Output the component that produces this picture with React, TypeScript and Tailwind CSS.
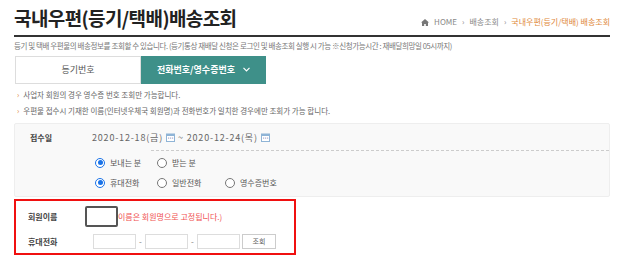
const font = "font-['Noto_Sans_CJK_KR','Noto_Sans',sans-serif]";

const Radio = ({ on, label, w }: { on?: boolean; label: string; w: string }) => (
  <label className={`flex items-center gap-[5px] shrink-0 ${w}`}>
    <span
      className={`size-[10px] rounded-full border flex items-center justify-center bg-white ${
        on ? "border-[#1a73e8]" : "border-[#777]"
      }`}
    >
      {on && <span className="size-[5px] rounded-full bg-[#1a73e8]" />}
    </span>
    <span className="text-[8px] text-[#555]">{label}</span>
  </label>
);

const Cal = () => (
  <svg width="9" height="9" viewBox="0 0 9 9" className="ml-[3px]">
    <rect x="0.5" y="1" width="8" height="7.5" fill="#fff" stroke="#8fb4d6" />
    <rect x="0.5" y="1" width="8" height="2" fill="#8fb4d6" />
    <rect x="2" y="4.5" width="1.2" height="1.2" fill="#aac" />
    <rect x="4" y="4.5" width="1.2" height="1.2" fill="#aac" />
    <rect x="6" y="4.5" width="1.2" height="1.2" fill="#aac" />
  </svg>
);

export default function App() {
  return (
    <div className={`w-[624px] h-[260px] bg-white overflow-hidden px-[14px] ${font}`}>
      <div className="flex justify-between items-end border-b-2 border-[#333] h-[37px] pb-[6px]">
        <h1 className="text-[19px] font-bold text-[#222] tracking-[-0.6px] leading-none mb-[2px]">
          국내우편(등기/택배)배송조회
        </h1>
        <div className="flex items-center gap-[5px] text-[8px] text-[#888] mb-[1px]">
          <svg width="8" height="7" viewBox="0 0 8 7">
            <path d="M4 0L0 3.5h1V7h2.2V5h1.6v2H7V3.5h1z" fill="#777" />
          </svg>
          <span>HOME</span>
          <span>›</span>
          <span>배송조회</span>
          <span>›</span>
          <span className="text-[#e0883a]">국내우편(등기/택배) 배송조회</span>
        </div>
      </div>

      <p className="text-[7.5px] text-[#777] mt-[5px] leading-none tracking-[-0.4px]">
        등기 및 택배 우편물의 배송정보를 조회할 수 있습니다. (등기통상 재배달 신청은 로그인 및 배송조회 실행 시 가능 ※신청가능시간 : 재배달희망일 05시까지)
      </p>

      <div className="flex mt-[6px] ml-[1px] h-[28px]">
        <div className="w-[126px] border border-[#ddd] flex items-center justify-center text-[9px] text-[#555]">
          등기번호
        </div>
        <div className="w-[125px] bg-[#3e9089] flex items-center justify-center gap-[8px] text-[9px] text-white font-bold">
          전화번호/영수증번호
          <svg width="7" height="5" viewBox="0 0 7 5">
            <path d="M0.5 0.8L3.5 3.8L6.5 0.8" stroke="#fff" strokeWidth="1.2" fill="none" />
          </svg>
        </div>
      </div>

      <ul className="mt-[3px] ml-[3px] text-[7.5px] text-[#666] leading-[16px]">
        <li className="flex gap-[4px]">
          <span className="text-[#e0883a]">›</span>사업자 회원의 경우 영수증 번호 조회만 가능합니다.
        </li>
        <li className="flex gap-[4px]">
          <span className="text-[#e0883a]">›</span>우편물 접수시 기재한 이름(인터넷우체국 회원명)과 전화번호가 일치한 경우에만 조회가 가능 합니다.
        </li>
      </ul>

      <div className="mt-[4px] h-[74px] bg-[#f9f9f9] border border-[#eee] rounded-[2px]">
        <div className="flex items-center h-[26px] pt-[2px]">
          <span className="w-[77px] pl-[15px] text-[8px] font-bold text-[#444]">접수일</span>
          <span className="text-[9px] text-[#666] tracking-[0.8px] flex items-center">
            2020-12-18(금)<Cal />
            <span className="mx-[3px]">~</span>
            2020-12-24(목)<Cal />
          </span>
        </div>
        <div className="ml-[136px] border-t border-dashed border-[#ccc]" />
        <div className="pl-[80px] pt-[6px] flex flex-col gap-[8px]">
          <div className="flex">
            <Radio on label="보내는 분" w="w-[62px]" />
            <Radio label="받는 분" w="w-[68px]" />
          </div>
          <div className="flex">
            <Radio on label="휴대전화" w="w-[62px]" />
            <Radio label="일반전화" w="w-[68px]" />
            <Radio label="영수증번호" w="w-[68px]" />
          </div>
        </div>
      </div>

      <div className="mt-[2px] w-[282px] h-[56px] border-[2.5px] border-[#f01010] px-[12px] pt-[5px]">
        <div className="flex items-center h-[22px]">
          <span className="w-[57px] text-[8px] font-bold text-[#444]">회원이름</span>
          <span className="w-[33px] h-[21px] border-2 border-[#555] rounded-[2px] bg-white" />
          <span className="text-[8px] text-[#f05050]">이름은 회원명으로 고정됩니다.)</span>
        </div>
        <div className="flex items-center h-[16px] mt-[6px]">
          <span className="w-[65px] text-[8px] font-bold text-[#444]">휴대전화</span>
          <span className="w-[43px] h-[15px] border border-[#ddd] bg-white" />
          <span className="w-[9px] text-center text-[8px] text-[#777]">-</span>
          <span className="w-[43px] h-[15px] border border-[#ddd] bg-white" />
          <span className="w-[9px] text-center text-[8px] text-[#777]">-</span>
          <span className="w-[43px] h-[15px] border border-[#ddd] bg-white" />
          <span className="ml-[2px] w-[34px] h-[15px] border border-[#ccc] bg-white flex items-center justify-center text-[7px] text-[#666]">
            조회
          </span>
        </div>
      </div>
    </div>
  );
}
